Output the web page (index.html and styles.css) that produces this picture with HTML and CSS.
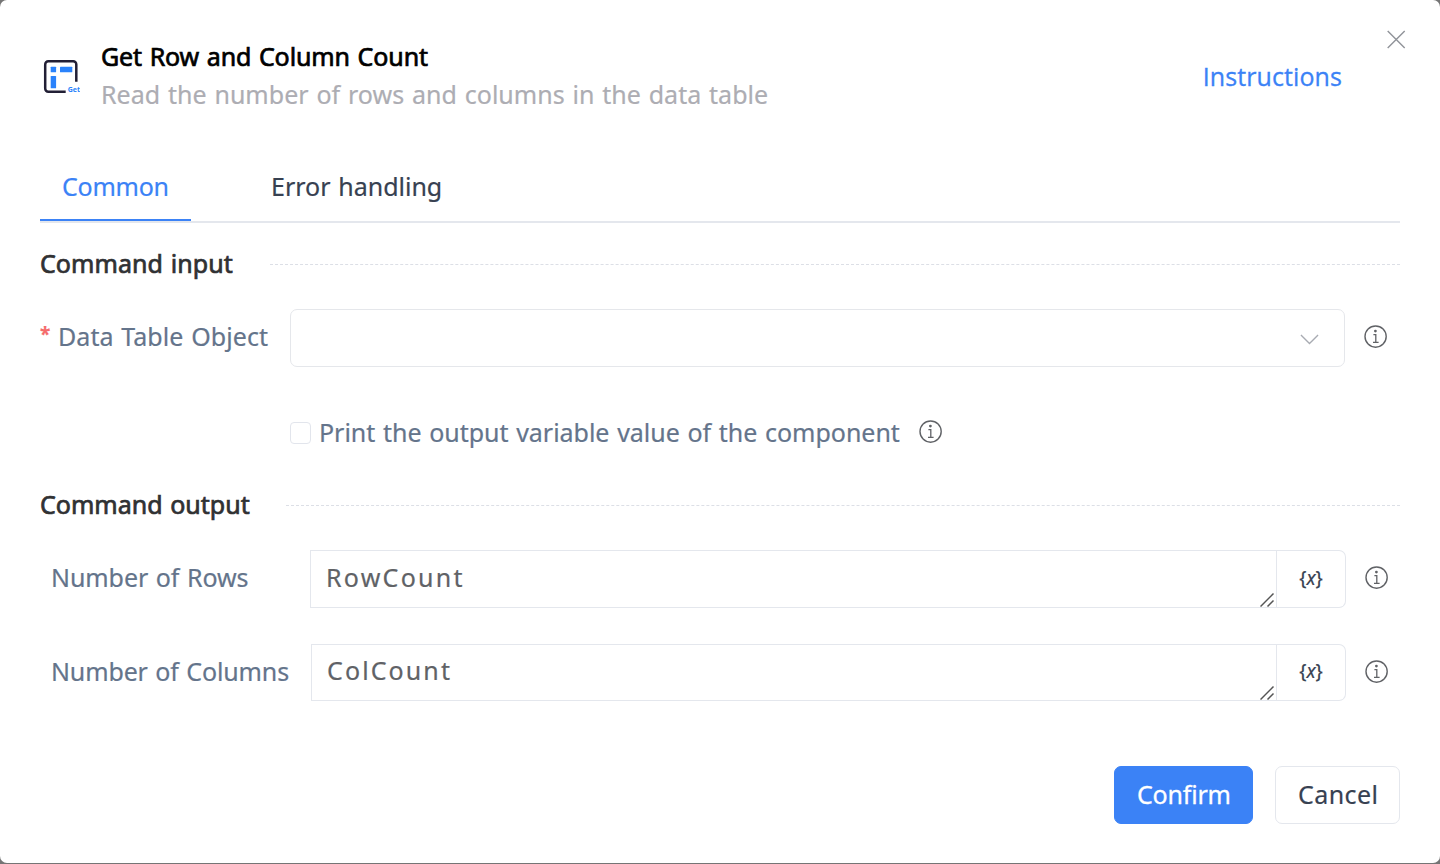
FILE: index.html
```
<!DOCTYPE html>
<html lang="en">
<head>
<meta charset="utf-8">
<title>Get Row and Column Count</title>
<link rel="stylesheet" href="styles.css">
</head>
<body>
<svg class="defs" width="0" height="0">
  <symbol id="info" viewBox="0 0 24 24">
    <circle cx="11.6" cy="11.6" r="10.6" fill="none" stroke="currentColor" stroke-width="1.4"/>
    <circle cx="11.4" cy="6.1" r="1.4" fill="currentColor"/>
    <path d="M9.4 9.7h2.4v7.6M9 17.3h5.6" fill="none" stroke="currentColor" stroke-width="1.3"/>
  </symbol>
</svg>
<main class="dialog">
  <header class="header">
    <svg class="logo" viewBox="0 0 40 40">
      <path d="M36.3 25.7V8.4a3.1 3.1 0 0 0-3.1-3.1H8.3A3.1 3.1 0 0 0 5.2 8.4v24.2a3.1 3.1 0 0 0 3.1 3.1H25.7" fill="none" stroke="#221f35" stroke-width="2.5"/>
      <g fill="#2a82fb"><rect x="10.7" y="10.7" width="5.4" height="5.6" rx=".6"/><rect x="20" y="10.7" width="12.3" height="5.6" rx=".6"/><rect x="10.7" y="20" width="5.4" height="12.3" rx=".6"/></g>
      <text class="logo-text" x="27.8" y="36">Get</text>
    </svg>
    <div class="heading">
      <h1 class="title"><span>Get Row and Column Count</span></h1>
      <p class="subtitle"><span>Read the number of rows and columns in the data table</span></p>
    </div>
    <a class="instructions">Instructions</a>
    <svg class="close" viewBox="0 0 20 20"><path d="M1.7 1.9l17 17M18.7 1.9l-17 17" fill="none" stroke="#909399" stroke-width="1.4"/></svg>
  </header>
  <nav class="tabs">
    <span class="tab active"><span class="t-common">Common</span></span>
    <span class="tab"><span class="t-error">Error handling</span></span>
  </nav>
  <h2 class="section input"><span class="s-in">Command input</span><i class="rule"></i></h2>
  <div class="row object">
    <label class="label"><span class="star">*</span><span class="l-object">Data Table Object</span></label>
    <div class="select"><svg class="chevron" viewBox="0 0 20 12"><path d="M1 1l9 9 9-9" fill="none" stroke="#a8abb2" stroke-width="1.4"/></svg></div>
    <svg class="info"><use href="#info"/></svg>
  </div>
  <div class="row print">
    <span class="checkbox"></span><span class="l-print">Print the output variable value of the component</span>
    <svg class="info"><use href="#info"/></svg>
  </div>
  <h2 class="section output"><span class="s-out">Command output</span><i class="rule"></i></h2>
  <div class="row rows">
    <label class="label"><span class="l-rows">Number of Rows</span></label>
    <div class="field"><span class="v-row">RowCount</span><svg class="grip" viewBox="0 0 16 16"><path d="M.5 15.5L13.5 2.5M7.5 15.5l6-6" fill="none" stroke="#555" stroke-width="1.5"/></svg></div>
    <div class="var">{<em>x</em>}</div>
    <svg class="info"><use href="#info"/></svg>
  </div>
  <div class="row cols">
    <label class="label"><span class="l-cols">Number of Columns</span></label>
    <div class="field"><span class="v-col">ColCount</span><svg class="grip" viewBox="0 0 16 16"><path d="M.5 15.5L13.5 2.5M7.5 15.5l6-6" fill="none" stroke="#555" stroke-width="1.5"/></svg></div>
    <div class="var">{<em>x</em>}</div>
    <svg class="info"><use href="#info"/></svg>
  </div>
  <footer class="footer">
    <button class="btn primary"><span class="b-ok">Confirm</span></button>
    <button class="btn"><span class="b-cancel">Cancel</span></button>
  </footer>
</main>
</body>
</html>
```
FILE: styles.css
```
* { box-sizing: border-box; }
body { margin: 0; height: 864px; background: #757575; font: 25px/36px "Noto Sans", sans-serif; word-spacing: 1.2px; -webkit-text-stroke: .2px currentColor; overflow: hidden; }
.defs { position: absolute; }
.dialog { height: 863px; background: #fff; border-radius: 7px; padding: 0 40px; color: #64748b; white-space: nowrap; }
h1, h2, p { margin: 0; font-weight: 400; font-size: inherit; }
.header { height: 155px; display: flex; padding-top: 38px; position: relative; }
.logo { width: 40px; height: 40px; margin-top: 18px; flex: none; }
.logo-text { font: 700 7px "Noto Sans", sans-serif; fill: #2a82fb; -webkit-text-stroke: 0; }
.heading { margin-left: 21px; flex: 1; }
.title { color: #000; -webkit-text-stroke: .7px #000; letter-spacing: -.1px; }
.subtitle { color: #adadb3; margin-top: 2px; letter-spacing: .04px; -webkit-text-stroke: .2px #adadb3; }
.instructions { color: #3b82f6; margin: 20px 58px 0 0; font-family: "Open Sans", sans-serif; letter-spacing: .1px; -webkit-text-stroke: .3px #3b82f6; }
.close { position: absolute; right: -6px; top: 29px; width: 20px; height: 20px; }
.tabs { display: flex; height: 68px; border-bottom: 2px solid #e4e7ed; color: #374151; }
.tab { padding-top: 13px; height: 66px; -webkit-text-stroke: .2px currentColor; }
.tab.active { width: 151px; padding-left: 22px; margin-right: 80px; color: #3b82f6; border-bottom: 2px solid #3b82f6; }
.t-common { letter-spacing: -.25px; }
.section { display: flex; align-items: center; height: 36px; color: #303133; -webkit-text-stroke: .7px #303133; letter-spacing: .06px; }
.section span { margin-top: -2px; }
.rule { flex: 1; border-top: 1px dashed #dcdfe6; }
.input { margin-top: 23px; }
.input .rule { margin-left: 37px; }
.output { margin-top: 36px; letter-spacing: 0; }
.output .rule { margin-left: 36px; }
.row { display: flex; align-items: center; height: 58px; }
.object { margin-top: 27px; }
.label { width: 250px; display: flex; margin-top: -4px; }
.star { color: #f56c6c; width: 18px; font-size: 19px; font-weight: 700; line-height: 33px; }
.l-object { letter-spacing: .06px; }
.l-rows { letter-spacing: -.08px; }
.l-cols { letter-spacing: -.14px; }
.select { width: 1055px; height: 58px; border: 1px solid #e5e7eb; border-radius: 7px; display: flex; align-items: center; justify-content: flex-end; padding-right: 25px; }
.chevron { width: 19px; height: 11.4px; margin-top: 3px; }
.info { width: 24px; height: 24px; margin: -2px 0 0 19px; color: #606266; flex: none; }
.print { height: 36px; margin: 48px 0 0 250px; }
.l-print { margin-top: -2px; letter-spacing: -.02px; }
.checkbox { width: 21px; height: 22px; border: 1px solid #e2e5ec; border-radius: 4px; margin-right: 8px; }
.rows { margin-top: 27px; }
.rows .label, .cols .label { padding-left: 11px; width: 270px; }
.cols .label { width: 271px; margin-top: -3px; }
.field { flex: none; width: 967px; height: 100%; border: 1px solid #e4e7ed; padding: 8px 0 0 15px; color: #606266; position: relative; }
.cols .field { width: 966px; padding-top: 7px; }
.v-row { letter-spacing: 2.25px; }
.v-col { letter-spacing: 2.1px; }
.cols { height: 57px; margin-top: 36px; }
.grip { position: absolute; width: 16px; height: 16px; right: 0; bottom: 0; }
.var { width: 69px; height: 100%; border: 1px solid #e4e7ed; border-left: 0; border-radius: 0 7px 7px 0; display: flex; align-items: center; justify-content: center; color: #374151; font-size: 19px; padding-bottom: 3px; -webkit-text-stroke: .2px #374151; }
.footer { display: flex; justify-content: flex-end; gap: 22px; margin-top: 65px; }
.btn { font: inherit; height: 58px; width: 125px; border: 1px solid #e4e7ed; border-radius: 7px; background: #fff; color: #374151; padding: 0 0 3px 22px; text-align: left; }
.primary { width: 139px; background: #3b82f6; color: #fff; border-color: #3b82f6; -webkit-text-stroke: .3px #fff; }
.b-ok { letter-spacing: -.2px; }
.b-cancel { letter-spacing: .4px; }
```
